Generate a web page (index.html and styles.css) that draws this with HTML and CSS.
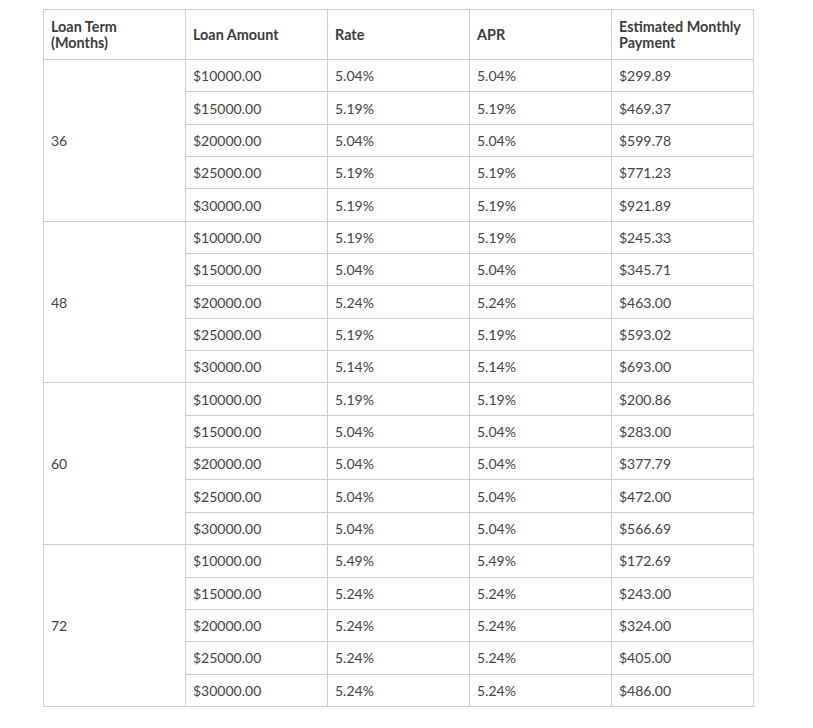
FILE: index.html
```html
<!DOCTYPE html>
<html>
<head>
<meta charset="utf-8">
<link rel="stylesheet" href="styles.css">
</head>
<body>
<table class="loans">
<colgroup><col class="c"><col class="c"><col class="c"><col class="c"><col class="c"></colgroup>
<thead>
<tr><th>Loan Term (Months)</th><th>Loan Amount</th><th>Rate</th><th>APR</th><th>Estimated Monthly Payment</th></tr>
</thead>
<tbody>
<tr><td rowspan="5" class="term">36</td><td>$10000.00</td><td>5.04%</td><td>5.04%</td><td>$299.89</td></tr>
<tr><td>$15000.00</td><td>5.19%</td><td>5.19%</td><td>$469.37</td></tr>
<tr><td>$20000.00</td><td>5.04%</td><td>5.04%</td><td>$599.78</td></tr>
<tr><td>$25000.00</td><td>5.19%</td><td>5.19%</td><td>$771.23</td></tr>
<tr><td>$30000.00</td><td>5.19%</td><td>5.19%</td><td>$921.89</td></tr>
<tr><td rowspan="5" class="term">48</td><td>$10000.00</td><td>5.19%</td><td>5.19%</td><td>$245.33</td></tr>
<tr><td>$15000.00</td><td>5.04%</td><td>5.04%</td><td>$345.71</td></tr>
<tr><td>$20000.00</td><td>5.24%</td><td>5.24%</td><td>$463.00</td></tr>
<tr><td>$25000.00</td><td>5.19%</td><td>5.19%</td><td>$593.02</td></tr>
<tr><td>$30000.00</td><td>5.14%</td><td>5.14%</td><td>$693.00</td></tr>
<tr><td rowspan="5" class="term">60</td><td>$10000.00</td><td>5.19%</td><td>5.19%</td><td>$200.86</td></tr>
<tr><td>$15000.00</td><td>5.04%</td><td>5.04%</td><td>$283.00</td></tr>
<tr><td>$20000.00</td><td>5.04%</td><td>5.04%</td><td>$377.79</td></tr>
<tr><td>$25000.00</td><td>5.04%</td><td>5.04%</td><td>$472.00</td></tr>
<tr><td>$30000.00</td><td>5.04%</td><td>5.04%</td><td>$566.69</td></tr>
<tr><td rowspan="5" class="term">72</td><td>$10000.00</td><td>5.49%</td><td>5.49%</td><td>$172.69</td></tr>
<tr><td>$15000.00</td><td>5.24%</td><td>5.24%</td><td>$243.00</td></tr>
<tr><td>$20000.00</td><td>5.24%</td><td>5.24%</td><td>$324.00</td></tr>
<tr><td>$25000.00</td><td>5.24%</td><td>5.24%</td><td>$405.00</td></tr>
<tr><td>$30000.00</td><td>5.24%</td><td>5.24%</td><td>$486.00</td></tr>
</tbody>
</table>
</body>
</html>
```
FILE: styles.css
```css
html, body {
  margin: 0;
  padding: 0;
  background: #ffffff;
}
body {
  font-family: Lato, "Open Sans", sans-serif;
  color: #444444;
}
.loans {
  border-collapse: collapse;
  table-layout: fixed;
  width: 711px;
  margin: 9px 0 0 43px;
}
.loans .c {
  width: 142px;
}
.loans th,
.loans td {
  border: 1px solid #cbcfd3;
  text-align: left;
  vertical-align: middle;
  padding: 0 7px;
}
.loans th {
  font-size: 14.4px;
  font-weight: 700;
  line-height: 16px;
  color: #3c3c3c;
  height: 49px;
  padding-right: 10px;
}
.loans td {
  font-size: 14px;
  font-weight: 400;
  line-height: 17px;
  height: 31.35px;
}
```
